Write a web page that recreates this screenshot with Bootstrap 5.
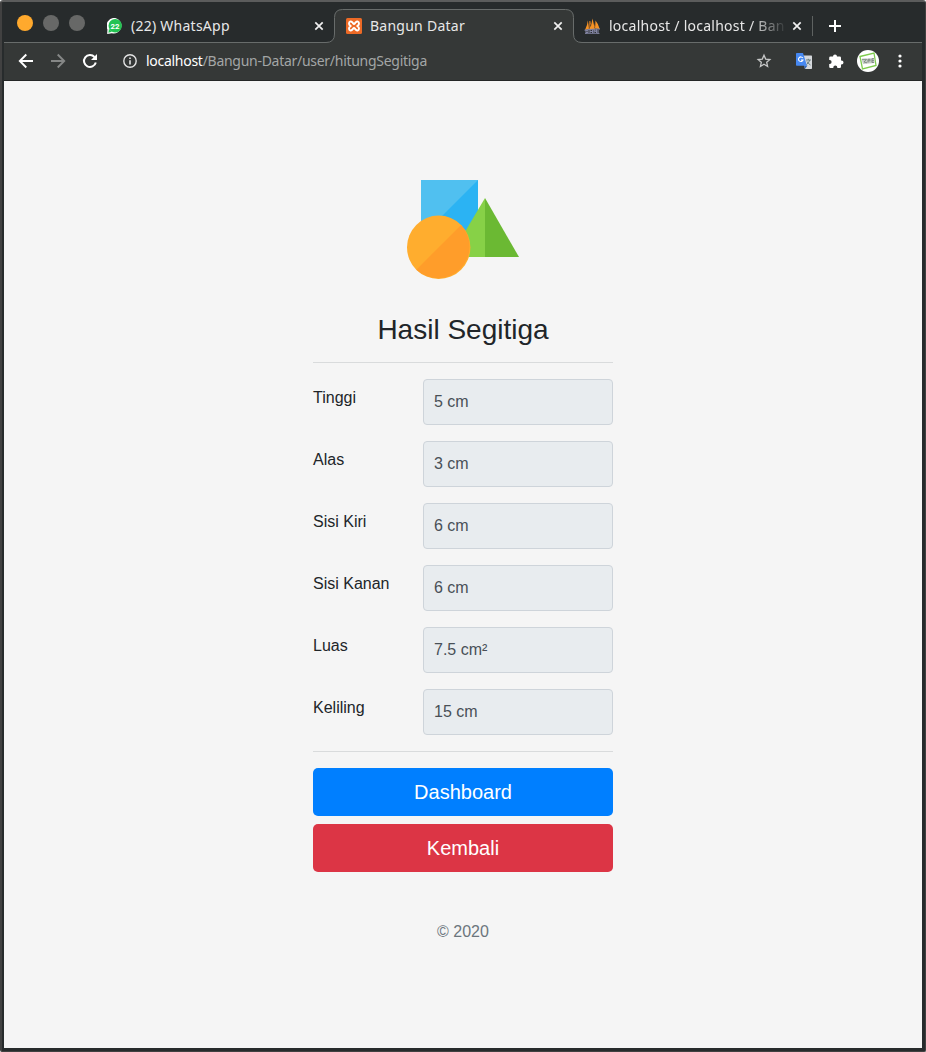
<!DOCTYPE html>
<html lang="id">
<head>
<meta charset="utf-8">
<title>Bangun Datar</title>
<link href="https://cdn.jsdelivr.net/npm/bootstrap@5.3.0/dist/css/bootstrap.min.css" rel="stylesheet">
<style>
  html, body { height: 100%; background: #fff; }
  body { font-family: "Liberation Sans", Arial, sans-serif; color: #212529; overflow: hidden; }
  .window { height: 1052px; border: 2px solid #414141; border-top-color: #5b5c5c; border-right: 1px solid #414141; border-bottom-width: 1px; border-radius: 3px 3px 2px 2px; background: #272b2c; padding: 0 3px 3px 2px; }
  .tabstrip { height: 41px; position: relative; font: 14px/20px "Noto Sans", sans-serif; letter-spacing: .25px; color: #e8e8e8; border-bottom: 1px solid #686c6b; }
  .toolbar { height: 38px; background: #353837; border-bottom: 1px solid #242626; font: 14px/20px "Noto Sans", sans-serif; color: #a3a6a6; position: relative; padding: 0 20px 2px 14px; }
  .dots { width: 90px; padding: 13px 0 0 13px; gap: 10px; }
  .dot { width: 16px; height: 16px; border-radius: 50%; background: #676867; }
  .dot-min { background: #ffa92d; }
  .tab-item { width: 240px; padding: 7px 9px 0 13px; position: relative; }
  .tab-first { width: 239px; padding-right: 8px; }
  .tab-item svg, .toolbar svg { flex: none; display: block; }
  .tab-last { width: 239px; padding-left: 11px; }
  .tab-label { white-space: nowrap; overflow: hidden; margin-left: 8px; flex: 1 1 0; }
  .tab-fade { -webkit-mask-image: linear-gradient(90deg, #000 78%, transparent 98%); mask-image: linear-gradient(90deg, #000 78%, transparent 98%); }
  .tab-shape { position: absolute; left: -11px; top: 7px; }
  .tab-sep { width: 1px; height: 20px; background: #5e6261; margin-top: 14px; }
  .plus { margin: 17px 0 0 16px; }
  .url { white-space: nowrap; letter-spacing: -.28px; }
  .url span { color: #fff; }
  .page { height: 967px; background: #f5f5f5; padding-top: 98.5px; }
  .form-calc { width: 300px; }
  .form-calc h1 { font-size: 28px; line-height: 34px; margin: 34.5px 0 0; font-weight: 400; }
  .form-calc hr { margin: 16px 0; border-top: 1px solid #d9dbdc; opacity: 1; }
  .form-calc h1 + hr { margin-top: 15px; }
  .form-calc .col-form-label { width: 110px; padding: 7px 0; }
  .form-calc .form-control { width: 190px; height: 46px; padding: 10px; background: #e8ecef; border-color: #ced4da; color: #495057; border-radius: 4px; line-height: 24px; }
  .form-calc .btn { height: 48px; border-radius: 5px; border: 0; font-size: 20px; line-height: 32px; }
  .btn-dash { background: #007fff; } .btn-back { background: #dc3545; }
  .copy { color: #6c757d; margin-top: 48px; }
</style>
<script src="https://cdn.jsdelivr.net/npm/bootstrap@5.3.0/dist/js/bootstrap.bundle.min.js"></script>
</head>
<body>
<div class="window">
  <div class="tabstrip d-flex">
    <div class="dots d-flex"><i class="dot dot-min"></i><i class="dot"></i><i class="dot"></i></div>
    <div class="tab-item tab-first d-flex align-items-center">
      <svg width="16" height="16" viewBox="0 0 16 16"><path d="M8.3 0A7.7 7.7 0 1 1 5 15.2L.2 16l.2-4.7A7.8 7.8 0 0 1 8.3 0Z" fill="#fff"/><circle cx="8.2" cy="7.8" r="6.700" fill="#23c352"/><path d="M1.400 14.700 2 10.800 5 13.800Z" fill="#23c352"/><text x="8.1" y="10.600" font-family="Roboto" font-size="7.800" font-weight="700" letter-spacing="0" text-anchor="middle" fill="#fff">22</text></svg>
      <span class="tab-label">(22) WhatsApp</span>
      <svg width="12" height="12" viewBox="0 0 12 12"><path d="m2.3 2.3 7.4 7.4m0-7.4-7.4 7.4" stroke="#f0f0f0" stroke-width="1.7"/></svg>
    </div>
    <div class="tab-item d-flex align-items-center">
      <svg class="tab-shape" width="264" height="34" viewBox="0 0 264 34"><path d="M0 33.500H4Q12.500 33.500 12.500 25V8.500Q12.500.5 20.500.5H243.500Q251.500.5 251.500 8.500V25Q251.500 33.500 260 33.500H264V34H0Z" fill="#353837"/><path d="M0 33.500H4Q12.500 33.500 12.500 25V8.500Q12.500.5 20.500.5H243.500Q251.500.5 251.500 8.500V25Q251.500 33.500 260 33.500H264" fill="none" stroke="#686c6b"/></svg>
      <svg class="position-relative" width="16" height="16" viewBox="0 0 16 16"><rect width="16" height="16" rx="1.500" fill="#ed6a26"/><path d="M6.200 4.200C4.800 3 3 3.600 3 5.400 3 6.900 3.900 7.400 4.600 8 3.900 8.600 3 9.100 3 10.600c0 1.800 1.800 2.400 3.200 1.200C7 11 7.300 10 8 10s1 1 1.800 1.800c1.400 1.200 3.200.6 3.200-1.200 0-1.500-.9-2-1.600-2.600.7-.6 1.600-1.100 1.600-2.600 0-1.800-1.800-2.400-3.200-1.200C9 5 8.700 6 8 6S7 5 6.200 4.200Z" fill="none" stroke="#fff" stroke-width="1.900"/></svg>
      <span class="tab-label position-relative">Bangun Datar</span>
      <svg class="position-relative" width="12" height="12" viewBox="0 0 12 12"><path d="m2.300 2.300 7.400 7.400m0-7.400-7.400 7.400" stroke="#f0f0f0" stroke-width="1.700"/></svg>
    </div>
    <div class="tab-item tab-last d-flex align-items-center">
      <svg width="17" height="16" viewBox="0 0 17 16"><path d="M1 12Q3.500 7 3.800 2.500L5.200 11ZM5.300 11Q8 6 8.500.5L11 11.500ZM11 10.500 11.500 2.500q3 3.500 4.200 8.500Z" fill="#f69325"/><path d="m5 11 .8-8 1.300 4.500M10.500 9l1-4" stroke="#b56b22" fill="none"/><path d="M2 16v-3.500h2v2H2m4-2.500v3m0-1.500h2.500m0-1.500v3m1.500 0v-3l1.300 1.500 1.200-1.500v3m1.500-3v3.500M.5 12.200 5 11.500 16 11M1 15.800h14.500" stroke="#8486a5" stroke-width="1.100" fill="none"/></svg>
      <span class="tab-label tab-fade">localhost / localhost / Ban</span>
      <svg width="12" height="12" viewBox="0 0 12 12"><path d="m2.300 2.300 7.400 7.400m0-7.400-7.400 7.400" stroke="#f0f0f0" stroke-width="1.700"/></svg>
    </div>
    <div class="tab-sep"></div>
    <svg class="plus" width="12" height="14" viewBox="0 0 12 14"><path d="M6 1v12M0 7h12" stroke="#fff" stroke-width="2"/></svg>
  </div>
  <div class="toolbar d-flex align-items-center">
    <svg width="16" height="16" viewBox="0 0 16 16"><path d="M15 8H2M8.300 1.500 1.800 8l6.500 6.500" fill="none" stroke="#fff" stroke-width="1.900"/></svg>
    <svg class="ms-3" width="16" height="16" viewBox="0 0 16 16"><path d="M1 8h13M7.700 1.500 14.200 8l-6.500 6.500" fill="none" stroke="#858786" stroke-width="1.900"/></svg>
    <svg class="ms-3" width="16" height="16" viewBox="0 0 16 16"><path d="M13.800 9.500A6 6 0 1 1 12.500 4" fill="none" stroke="#fff" stroke-width="2"/><path d="M15 1v6H9Z" fill="#fff"/></svg>
    <svg width="16" height="16" viewBox="0 0 16 16" style="margin-left:24px"><circle cx="8" cy="8" r="6.200" fill="none" stroke="#e4e4e4" stroke-width="1.400"/><path d="M8 4.500v1.600M8 7.200v4.300" stroke="#e4e4e4" stroke-width="1.600"/></svg>
    <div class="url ms-2"><span>localhost</span>/Bangun-Datar/user/hitungSegitiga</div>
    <svg class="ms-auto" width="16" height="16" viewBox="0 0 16 16"><path d="m8 2.200 1.700 3.900 4.200.4-3.200 2.800.9 4.200L8 11.300l-3.600 2.200.9-4.200-3.200-2.800 4.200-.4Z" fill="none" stroke="#c7c8c8" stroke-width="1.300"/></svg>
    <svg width="16" height="16" viewBox="0 0 16 16" style="margin-left:24px"><path d="M6 2.500h9.300q.7 0 .7.700v12.100q0 .7-.7.700H9Z" fill="#d5d8dc"/><path d="m8 12.500 3.500 0L9 16Z" fill="#3367b6"/><path d="M.7 0H7l4 12.700H.7Q0 12.700 0 12V.7Q0 0 .7 0Z" fill="#4688f1"/><path d="M6.800 5A2.300 2.300 0 1 0 7 7H5" fill="none" stroke="#fff" stroke-width="1.100"/><path d="M10 7h5M12.300 5.800V7m1.400 0q-.7 3-3.200 4.500M11 8.500q1 2 3.500 3.500" fill="none" stroke="#687e7e" stroke-width="1"/></svg>
    <svg class="ms-3" width="16" height="16" viewBox="0 0 16 16"><path d="M5 3.500a2 2 0 1 1 4 0h2.700q1.300 0 1.300 1.300v2.700h.5a2 2 0 1 1 0 4H13v2.200q0 1.300-1.300 1.300H9.300v-.5a2 2 0 0 0-4 0v.5H2.500Q1.200 15 1.200 13.700V11h.4a2 2 0 0 0 0-4h-.4V4.800q0-1.300 1.300-1.300Z" fill="#fff"/></svg>
    <svg width="22" height="22" viewBox="0 0 22 22" style="margin-left:13px"><circle cx="11" cy="11" r="11" fill="#fff"/><path d="m3 6.500 14-3.500 2 12.500L5.500 19Z" fill="none" stroke="#7ecb4e" stroke-width="1.300"/><path d="M4.500 9 17 8l.5 5L6 14Z" fill="#c5cbc6"/><path d="M5 9.300h4.500L7 12l3 .8M11 12.500V9.300h2v1.500h-2M17 8.700h-2v3.800h2m-2-1.900h2" fill="none" stroke="#7c877f" stroke-width=".9"/></svg>
    <svg width="4" height="16" viewBox="0 0 4 16" style="margin-left:19px"><g fill="#fff"><circle cx="2" cy="3" r="1.600"/><circle cx="2" cy="8" r="1.600"/><circle cx="2" cy="13" r="1.600"/></g></svg>
  </div>
  <main class="page">
    <div class="form-calc mx-auto text-center">
      <svg class="d-block mx-auto" width="112" height="99" viewBox="0 0 112 99"><path d="M14 0h57v57H14Z" fill="#50c0f0"/><path d="M71 0v57H14Z" fill="#2bb3f3"/><path d="M78 18v59H43Z" fill="#87d147"/><path d="M78 18l34 59H78Z" fill="#6bb933"/><circle cx="31.700" cy="67.300" r="31.700" fill="#ffad2e"/><path d="M54.100 44.900A31.700 31.700 0 0 1 9.300 89.700Z" fill="#ff9d2a"/></svg>
      <h1>Hasil Segitiga</h1>
      <hr>
      <div class="d-flex mb-3"><label class="col-form-label text-start">Tinggi</label><input class="form-control" value="5 cm" readonly></div>
      <div class="d-flex mb-3"><label class="col-form-label text-start">Alas</label><input class="form-control" value="3 cm" readonly></div>
      <div class="d-flex mb-3"><label class="col-form-label text-start">Sisi Kiri</label><input class="form-control" value="6 cm" readonly></div>
      <div class="d-flex mb-3"><label class="col-form-label text-start">Sisi Kanan</label><input class="form-control" value="6 cm" readonly></div>
      <div class="d-flex mb-3"><label class="col-form-label text-start">Luas</label><input class="form-control" value="7.5 cm²" readonly></div>
      <div class="d-flex"><label class="col-form-label text-start">Keliling</label><input class="form-control" value="15 cm" readonly></div>
      <hr>
      <button class="btn btn-lg btn-dash text-white w-100 d-block mb-2">Dashboard</button>
      <button class="btn btn-lg btn-back text-white w-100 d-block">Kembali</button>
      <p class="copy mb-0">© 2020</p>
    </div>
  </main>
</div>
</body>
</html>
